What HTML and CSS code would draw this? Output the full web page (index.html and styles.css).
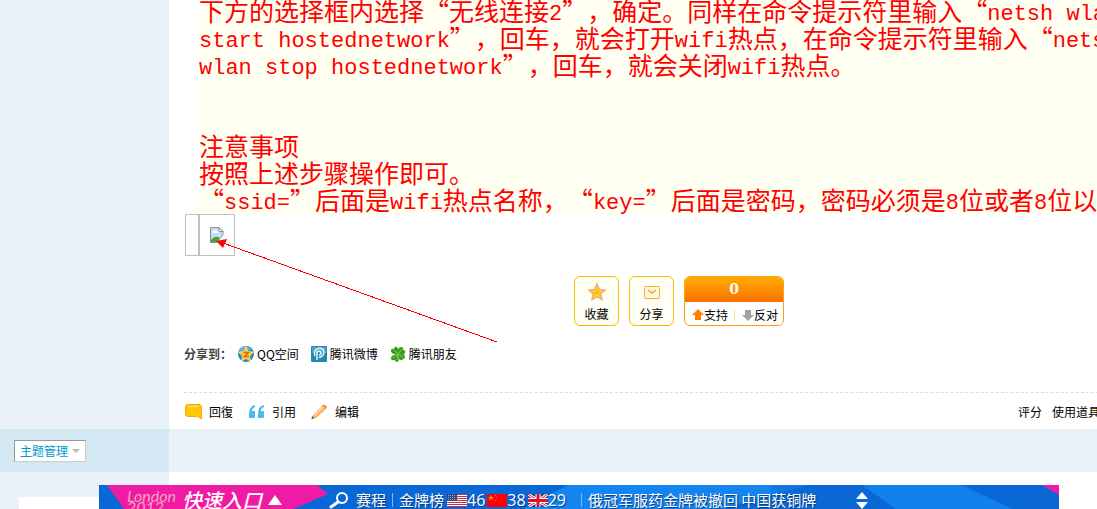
FILE: index.html
```html
<!DOCTYPE html>
<html lang="zh-CN">

<head>
    <meta charset="UTF-8">
    <meta name="viewport" content="width=device-width, initial-scale=1.0">
    <title>无线热点设置</title>
    <link rel="stylesheet" href="styles.css">
</head>

<body>
    <div class="post">
        <div class="side"></div>
        <div class="main">
            <div class="message">
                <p>下方的选择框内选择“无线连接<span class="en">2</span>”，确定。同样在命令提示符里输入“<span class="en">netsh wlan</span></p>
                <p><span class="en">start hostednetwork</span>”，回车，就会打开<span class="en">wifi</span>热点，在命令提示符里输入“<span class="en">netsh</span></p>
                <p><span class="en">wlan stop hostednetwork</span>”，回车，就会关闭<span class="en">wifi</span>热点。</p>
                <p><br></p>
                <p><br></p>
                <p>注意事项</p>
                <p>按照上述步骤操作即可。</p>
                <p>“<span class="en">ssid=</span>”后面是<span class="en">wifi</span>热点名称，“<span class="en">key=</span>”后面是密码，密码必须是<span class="en">8</span>位或者<span class="en">8</span>位以上</p>
            </div>

            <div class="attach">
                <div class="cell"></div>
                <div class="cell cell-img">
                    <svg width="16" height="16" viewBox="0 0 16 16">
                        <path d="M1.500 .5h8.500l4 4v3l-6 8H1.500z" fill="#c9dcf7" stroke="#8a8f98"/>
                        <path d="M10 .5v4h4z" fill="#fff" stroke="#8a8f98"/>
                        <path d="M3 6q0-2 2-2 1-2 3 0 2 0 2 2z" fill="#fff"/>
                        <path d="M2 15v-2q3-4 7-3l2 1-3 4z" fill="#4aa331"/>
                        <path d="M8 16l7-8v8z" fill="#fff"/>
                    </svg>
                </div>
                <svg class="arrow" width="284" height="108" viewBox="0 0 284 108">
                    <path d="M8 5L282 104" stroke="#f00" fill="none" shape-rendering="crispEdges"/>
                    <path d="M1 3l11-2-4 9z" fill="#f00"/>
                </svg>
            </div>

            <div class="votes">
                <button class="box" type="button">
                    <svg width="20" height="20" viewBox="0 0 20 20">
                        <path d="M10 2l2.300 5.500 5.700.5-4.300 4 1.300 5.500-5-3-5 3L6.300 12 2 8l5.700-.5z" fill="#ffd65c" stroke="#e9b070" stroke-width="1.500"/>
                        <path d="M10 5l1.500 4 3.500.5-3 2 1 3-3-2-3 2 1-3-3-2 3.500-.5z" fill="#ffc400"/>
                    </svg>
                    收藏
                </button>
                <button class="box" type="button">
                    <svg width="20" height="20" viewBox="0 0 20 20">
                        <rect x="2.500" y="4.500" width="15" height="12" rx="1" fill="#fff6dc" stroke="#f0b030"/>
                        <path d="M6 8l4 3 4-3" fill="none" stroke="#eaa848" stroke-width="1.500"/>
                    </svg>
                    分享
                </button>
                <div class="poll">
                    <div class="count">0</div>
                    <div class="poll-row">
                        <button type="button">
                            <svg width="12" height="12" viewBox="0 0 12 12"><path d="M6 0l6 6H9v5H3V6H0z" fill="#ff7e00"/></svg>支持
                        </button>
                        <button class="down" type="button">
                            <svg width="12" height="12" viewBox="0 0 12 12"><path d="M6 12L0 6h3V1h6v5h3z" fill="#a3a3a3"/></svg>反对
                        </button>
                    </div>
                </div>
            </div>

            <div class="share">
                <b>分享到：</b>
                <a href="#">
                    <svg width="16" height="16" viewBox="0 0 16 16">
                        <circle cx="8" cy="8" r="8" fill="#2b87bd"/>
                        <path d="M1 5q3-6 9-4l4 3z" fill="#67b9df"/>
                        <path d="M8 .5l2 5 5.500.5-4 4 1 5-4.500-2.500L3.500 15l1-5-4-4L6 5.500z" fill="#ffc42b" stroke="#fff0a0" stroke-width=".7"/>
                        <path d="M5.500 6.500h5l-4 4H11" fill="none" stroke="#df6817" stroke-width="1.500"/>
                    </svg>QQ空间
                </a>
                <a href="#">
                    <svg width="16" height="16" viewBox="0 0 16 16">
                        <rect width="16" height="16" rx="1" fill="#2588b2"/>
                        <path d="M1 1h14v6H1z" fill="#46a2c6"/>
                        <path d="M6 14V7q0-2 2-2t2 2-2 2M4 10Q2 4 7 2.500q5-1 6 3 0 5-5 6" fill="none" stroke="#dff4ff" stroke-width="1.500"/>
                    </svg>腾讯微博
                </a>
                <a href="#">
                    <svg width="16" height="16" viewBox="0 0 16 16">
                        <g fill="#3a9e22">
                            <path d="M8 9Q0 8 1 4q1-2 3-1 0-3 3-2 2 2 1 8z"/>
                            <path d="M8 9Q7 1 11 1q3 0 2 3 3 0 2 3-2 3-7 2z"/>
                            <path d="M8 8q7-1 7 3 0 2-2 2-1 2-3 1-2-2-2-6z"/>
                            <path d="M8 8q2 7-1 8-2 0-2-2-3 1-4-1-1-4 7-5z"/>
                        </g>
                        <path d="M8 8L4 4M8 8l4-5M8 8l5 3M8 8l-5 4M8 8l-1 6" stroke="#79ce4e" fill="none"/>
                    </svg>腾讯朋友
                </a>
            </div>

            <div class="actions">
                <a class="reply" href="#">
                    <svg width="17" height="16" viewBox="0 0 17 16"><path d="M3 .5h11q2.500 0 2.500 2.500v12l-4-2.500H3Q.5 12.500.5 10V3Q.5.5 3 .5z" fill="#ffc800" stroke="#f5a623"/><path d="M3 2h10v1H3z" fill="#ffe680"/></svg>
                    回復
                </a>
                <a href="#">
                    <svg width="17" height="16" viewBox="0 0 17 16"><path d="M7 1Q0 2 1 14h5q1 0 1-1V8q0-1-1-1H4q0-3 3-4zM16 1Q9 2 10 14h5q1 0 1-1V8q0-1-1-1h-2q0-3 3-4z" fill="#49bce8"/></svg>
                    引用
                </a>
                <a href="#">
                    <svg width="17" height="16" viewBox="0 0 17 16"><path d="M2 11L12 1q2-1 4 2 0 1-1 2L5 14l-4 1z" fill="#f9b45c"/><path d="M3 11l9-9 1 1-9 9z" fill="#ffdca5"/><path d="M12 1q2-1 4 2l-1 2-4-3z" fill="#ee9550"/><path d="M1 12l2 2-2.500 1.500z" fill="#555"/></svg>
                    编辑
                </a>
                <div class="right-links">
                    <a href="#">评分</a>
                    <a href="#">使用道具</a>
                </div>
            </div>
        </div>
    </div>

    <div class="manage-bar">
        <div class="manage">
            <button type="button">主题管理<svg width="8" height="4" viewBox="0 0 8 4"><path d="M0 0h8L4 4z" fill="#bbb"/></svg></button>
        </div>
    </div>

    <div class="next">
        <div class="side"><div class="avatar"></div></div>
    </div>

    <div class="banner">
        <svg class="banner-bg" width="960" height="24" viewBox="0 0 960 24">
            <path d="M0 0h960v24H0z" fill="#0a68d6"/>
            <path d="M469 0h203v10l-52 14H425z" fill="#1384f0"/>
            <path d="M672 0h37l-37 10z" fill="#1079e4"/>
            <path d="M763 0h100l50 24H797z" fill="#1080ea"/>
            <path d="M8 0h210l11 9-35 15H25z" fill="#f01ba4"/>
            <path d="M943 0h17v10z" fill="#f01ba4"/>
        </svg>
        <div class="quick">
            <div class="london">London<br>2012</div>
            <a href="#">快速入口</a>
            <svg width="14" height="10" viewBox="0 0 14 10"><path d="M7 0l7 10H0z" fill="#fff"/></svg>
        </div>
        <div class="medals">
            <svg class="search" width="20" height="17" viewBox="0 0 20 17"><circle cx="13" cy="6" r="5" fill="none" stroke="#fff" stroke-width="2"/><path d="M9 10l-7 5" stroke="#fff" stroke-width="3" stroke-linecap="round"/></svg>
            <a href="#">赛程</a>
            <i></i>
            <a href="#">金牌榜</a>
            <svg width="20" height="13" viewBox="0 0 20 13">
                <path d="M0 0h20v13H0z" fill="#fff"/>
                <path d="M0 .5h20M0 2.500h20M0 4.500h20M0 6.500h20M0 8.500h20M0 10.500h20M0 12.500h20" stroke="#c33246"/>
                <path d="M0 0h10v7H0z" fill="#31477d"/>
                <path d="M1 1.500h8M1 3.500h8M1 5.500h8" stroke="#9aa7c9" stroke-dasharray="1 1"/>
            </svg>
            <span>46</span>
            <svg width="20" height="13" viewBox="0 0 20 13"><path d="M0 0h20v13H0z" fill="#f00"/><path d="M4 1l1 2h2L5.500 4.500 6 6.500 4 5.300 2 6.500l.5-2L1 3h2z" fill="#f8772a"/><path d="M8 1h1v1H8zM9 3h1v1H9zM8 6h1v1H8z" fill="#f8772a"/></svg>
            <span>38</span>
            <svg width="20" height="13" viewBox="0 0 20 13">
                <path d="M0 0h20v13H0z" fill="#26377e"/>
                <path d="M0 0l20 13M20 0L0 13" stroke="#fff" stroke-width="3"/>
                <path d="M0 0l20 13M20 0L0 13" stroke="#d3193b"/>
                <path d="M10 0v13M0 6.500h20" stroke="#fff" stroke-width="5"/>
                <path d="M10 0v13M0 6.500h20" stroke="#e01030" stroke-width="3"/>
            </svg>
            <span>29</span>
            <i class="gap"></i>
            <a href="#">俄冠军服药金牌被撤回 中国获铜牌</a>
            <svg class="updown" width="12" height="17" viewBox="0 0 12 17"><path d="M6 0l6 7H0zM6 17l6-7H0z" fill="#fff"/></svg>
        </div>
    </div>
</body>

</html>
```
FILE: styles.css
```css
:root {
    --side-bg: #e9f1f9;
    --side-dark: #d3e8f2;
    --red: #ff0000;
    --side-width: 169px;
}

* {
    box-sizing: border-box;
}

body {
    margin: 0;
    font-family: "Noto Sans CJK SC", sans-serif;
    font-size: 12px;
    line-height: 16px;
    color: #000;
    background: #fff;
    overflow: hidden;
}

a {
    color: inherit;
    text-decoration: none;
}

button {
    font: inherit;
    color: inherit;
    padding: 0;
    border: none;
    background: none;
    cursor: pointer;
}

svg {
    display: block;
    flex: none;
}

.post,
.next {
    display: grid;
    grid-template-columns: var(--side-width) 1fr;
}

.side {
    background: var(--side-bg);
}

/* the post is wider than the window, the rest is cut off */
.main {
    min-width: 0;
    margin-right: -77px;
    padding-left: 15px;
}

.message {
    margin: -3px 0 0 15px;
    padding-bottom: 1px;
    background: #fffff2;
    color: var(--red);
    font-size: 25px;
    line-height: 27px;
    white-space: nowrap;
    overflow: hidden;
    text-spacing-trim: space-all;
}

.message p {
    height: 27px;
    margin: 0;
}

.en {
    font-family: "Liberation Mono", monospace;
    font-size: 22px;
    line-height: 1;
    vertical-align: 1px;
}

.attach {
    position: relative;
    display: flex;
    padding-left: 1px;
}

.cell {
    width: 14px;
    height: 42px;
    border: 1px solid #c0c0c0;
}

.cell-img {
    width: 36px;
    padding: 12px 9px;
}

.arrow {
    position: absolute;
    left: 31px;
    top: 24px;
}

.votes {
    display: flex;
    justify-content: center;
    gap: 10px;
    margin-top: 20px;
}

.box {
    display: flex;
    flex-direction: column;
    align-items: center;
    gap: 4px;
    width: 45px;
    height: 50px;
    padding-top: 5px;
    border: 1px solid #f5c000;
    border-radius: 6px;
    background: #fffef5;
}

.poll {
    width: 100px;
    height: 50px;
    border: 1px solid #ffa010;
    border-radius: 6px;
    overflow: hidden;
}

.count {
    height: 25px;
    background: linear-gradient(#ffab00, #ff7200);
    color: #fff;
    font-family: "DejaVu Serif", serif;
    font-size: 14px;
    font-weight: bold;
    line-height: 25px;
    text-align: center;
}

.poll-row {
    display: flex;
    justify-content: space-between;
    padding: 5px 5px 0 7px;
}

.poll-row button {
    display: flex;
    align-items: center;
}

.poll-row .down {
    padding-left: 8px;
    background: linear-gradient(#ffd890, #ffd890) left / 1px 11px no-repeat;
}

.share {
    display: flex;
    align-items: center;
    gap: 12px;
    margin-top: 20px;
}

.share b {
    color: #444;
    margin-right: -6px;
}

.share a {
    display: flex;
    align-items: center;
    gap: 3px;
}

.actions {
    display: flex;
    align-items: center;
    gap: 15px;
    height: 37px;
    margin-top: 30px;
    padding: 1px 0 0 1px;
    border-top: 1px dashed #ddd;
}

.actions a {
    display: flex;
    align-items: center;
    gap: 7px;
}

.right-links {
    display: flex;
    gap: 10px;
    margin-left: auto;
    padding-right: 74px;
}

.manage-bar {
    background: var(--side-bg);
}

.manage {
    width: var(--side-width);
    height: 43px;
    padding: 11px 14px;
    background: var(--side-dark);
}

.manage button {
    display: flex;
    align-items: center;
    gap: 4px;
    height: 22px;
    padding: 0 5px;
    border: 1px solid;
    border-color: #999 #ccc #ccc #999;
    background: #fff;
    color: #0099cc;
}

.next .side {
    padding: 25px 0 0 19px;
}

.avatar {
    height: 12px;
    background: #fff;
}

.banner {
    position: absolute;
    left: 99px;
    right: 38px;
    bottom: 0;
    display: flex;
    height: 24px;
    overflow: hidden;
    background: #0a68d6;
    color: #fff;
}

.banner-bg {
    position: absolute;
    left: 0;
    top: 0;
}

.quick,
.medals {
    position: relative;
    display: flex;
    align-items: center;
    white-space: nowrap;
}

.quick {
    width: 230px;
    padding: 6px 0 0 28px;
}

.london {
    height: 20px;
    margin-right: 6px;
    color: #f3a5bc;
    font: italic 16px/11px Lato, sans-serif;
}

.quick a {
    margin-right: 6px;
    font-size: 20px;
    font-style: italic;
    font-weight: 500;
    line-height: 18px;
}

.medals {
    padding-top: 6px;
    font-size: 15px;
    line-height: 18px;
    text-shadow: 1px 1px 1px #063a80;
}

.medals i {
    width: 1px;
    height: 14px;
    margin: 0 6px;
    background: #7db8f4;
}

.medals span {
    margin-right: 2px;
    font-family: "Open Sans", sans-serif;
    font-size: 16px;
}

.medals a + svg {
    margin-left: 3px;
}

.medals .search {
    margin-right: 7px;
}

.medals .gap {
    margin-left: 13px;
}

.medals .updown {
    margin-left: 40px;
}
```
